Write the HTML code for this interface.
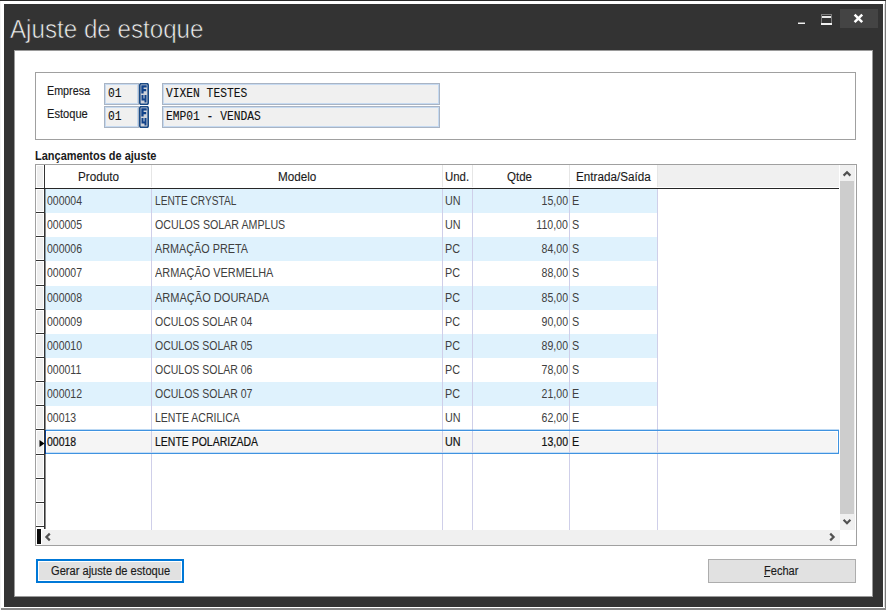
<!DOCTYPE html>
<html><head><meta charset="utf-8"><title>Ajuste de estoque</title>
<style>
html,body{margin:0;padding:0;width:886px;height:610px;overflow:hidden;background:#fff}
.r{position:absolute;display:block}
.t{position:absolute;white-space:pre;display:block;font-family:"Liberation Sans",sans-serif}
</style></head><body>
<div class="r" style="left:0px;top:0px;width:886px;height:610px;background:#f4f4f4;"></div>
<div class="r" style="left:0px;top:0px;width:886px;height:1px;background:#2b2b2b;"></div>
<div class="r" style="left:1px;top:1px;width:884px;height:607px;background:#ffffff;"></div>
<div class="r" style="left:885px;top:1px;width:1px;height:609px;background:#7a7a7a;"></div>
<div class="r" style="left:884px;top:4px;width:1px;height:603px;background:#d8d8d8;"></div>
<div class="r" style="left:1px;top:608px;width:885px;height:2px;background:#8a8a8a;"></div>
<div class="r" style="left:4px;top:4px;width:879px;height:603px;background:#333333;"></div>
<span class="t" style="left:9.5px;top:15.6px;font-size:26.5px;line-height:26.5px;color:#f0f0f0;font-weight:400;font-family:'Liberation Sans',sans-serif;transform:scaleX(0.912);transform-origin:0 0;-webkit-text-stroke:0.65px #333333">Ajuste de estoque</span>
<div class="r" style="left:798px;top:22px;width:7px;height:1px;background:#8c8c8c;"></div>
<div class="r" style="left:798px;top:23px;width:7px;height:1px;background:#f0f0f0;"></div>
<div class="r" style="left:821px;top:14px;width:11px;height:11px;background:#333;box-sizing:border-box;border:1px solid #7c7c7c"></div>
<div class="r" style="left:822px;top:16px;width:9px;height:2px;background:#e8e8e8;"></div>
<div class="r" style="left:821px;top:23px;width:11px;height:2px;background:#f0f0f0;"></div>
<div class="r" style="left:840px;top:9px;width:38px;height:19px;background:#444444;"></div>
<svg class="r" style="left:853px;top:13px" width="11" height="11" viewBox="0 0 11 11"><path d="M1.6 1.6 L9.2 9.2 M9.2 1.6 L1.6 9.2" stroke="#ffffff" stroke-width="2.5" stroke-linecap="butt"/></svg>
<div class="r" style="left:14px;top:50px;width:859px;height:547px;background:#ffffff;"></div>
<div class="r" style="left:14px;top:50px;width:859px;height:1px;background:#9a9a9a;"></div>
<div class="r" style="left:14px;top:596px;width:859px;height:1px;background:#9a9a9a;"></div>
<div class="r" style="left:14px;top:50px;width:1px;height:547px;background:#9a9a9a;"></div>
<div class="r" style="left:872px;top:50px;width:1px;height:547px;background:#9a9a9a;"></div>
<div class="r" style="left:35px;top:72px;width:821px;height:68px;background:transparent;box-sizing:border-box;border:1px solid #a0a0a0"></div>
<span class="t" style="left:46.5px;top:84.5px;font-size:12px;line-height:12px;color:#1a1a1a;font-weight:400;font-family:'Liberation Sans',sans-serif;transform:scaleX(0.895);transform-origin:0 0;-webkit-text-stroke:0.15px #1a1a1a">Empresa</span>
<span class="t" style="left:46.5px;top:107.5px;font-size:12px;line-height:12px;color:#1a1a1a;font-weight:400;font-family:'Liberation Sans',sans-serif;transform:scaleX(0.925);transform-origin:0 0;-webkit-text-stroke:0.15px #1a1a1a">Estoque</span>
<div class="r" style="left:104px;top:83px;width:35px;height:22px;background:#f0f0f0;box-sizing:border-box;border:1px solid #a9b4c4;box-shadow:inset 0 0 0 1px #c6daf1"></div>
<div class="r" style="left:162px;top:83px;width:278px;height:22px;background:#f0f0f0;box-sizing:border-box;border:1px solid #a9b4c4;box-shadow:inset 0 0 0 1px #c6daf1"></div>
<svg class="r" style="left:139px;top:83px" width="10" height="22" viewBox="0 0 10 22"><rect x="0.8" y="0.7" width="8.4" height="20.6" rx="1.2" fill="#cfd3da" stroke="#1a4a85" stroke-width="1.6"/><path d="M2.3 2.3 H7.7 V4.6 H4.6 V6 H7.2 V8.2 H4.6 V10.6 H2.3 Z" fill="#10428a"/><path d="M2.5 12 H4.5 V15.5 H5.5 V12 H7.5 V19.5 H5.5 V17.5 H2.5 Z" fill="#10428a"/></svg>
<div class="r" style="left:104px;top:106px;width:35px;height:22px;background:#f0f0f0;box-sizing:border-box;border:1px solid #a9b4c4;box-shadow:inset 0 0 0 1px #c6daf1"></div>
<div class="r" style="left:162px;top:106px;width:278px;height:22px;background:#f0f0f0;box-sizing:border-box;border:1px solid #a9b4c4;box-shadow:inset 0 0 0 1px #c6daf1"></div>
<svg class="r" style="left:139px;top:106px" width="10" height="22" viewBox="0 0 10 22"><rect x="0.8" y="0.7" width="8.4" height="20.6" rx="1.2" fill="#cfd3da" stroke="#1a4a85" stroke-width="1.6"/><path d="M2.3 2.3 H7.7 V4.6 H4.6 V6 H7.2 V8.2 H4.6 V10.6 H2.3 Z" fill="#10428a"/><path d="M2.5 12 H4.5 V15.5 H5.5 V12 H7.5 V19.5 H5.5 V17.5 H2.5 Z" fill="#10428a"/></svg>
<span class="t" style="left:108px;top:87.5px;font-size:12px;line-height:12px;color:#111111;font-weight:400;font-family:'Liberation Mono',sans-serif;transform:scaleX(0.94);transform-origin:0 0;-webkit-text-stroke:0.1px #111">01</span>
<span class="t" style="left:108px;top:110.5px;font-size:12px;line-height:12px;color:#111111;font-weight:400;font-family:'Liberation Mono',sans-serif;transform:scaleX(0.94);transform-origin:0 0;-webkit-text-stroke:0.1px #111">01</span>
<span class="t" style="left:166px;top:87.5px;font-size:12px;line-height:12px;color:#111111;font-weight:400;font-family:'Liberation Mono',sans-serif;transform:scaleX(0.94);transform-origin:0 0;-webkit-text-stroke:0.1px #111">VIXEN TESTES</span>
<span class="t" style="left:166px;top:110.5px;font-size:12px;line-height:12px;color:#111111;font-weight:400;font-family:'Liberation Mono',sans-serif;transform:scaleX(0.94);transform-origin:0 0;-webkit-text-stroke:0.1px #111">EMP01 - VENDAS</span>
<span class="t" style="left:35px;top:150px;font-size:12px;line-height:12px;color:#1a1a1a;font-weight:700;font-family:'Liberation Sans',sans-serif;transform:scaleX(0.915);transform-origin:0 0;">Lançamentos de ajuste</span>
<div class="r" style="left:35px;top:164px;width:822px;height:382px;background:#ffffff;box-sizing:border-box;border:1px solid #a0a0a0"></div>
<div class="r" style="left:657px;top:165px;width:182px;height:22px;background:#f0f0f0;"></div>
<div class="r" style="left:151px;top:165px;width:1px;height:22px;background:#e6e6e6;"></div>
<div class="r" style="left:442px;top:165px;width:1px;height:22px;background:#e6e6e6;"></div>
<div class="r" style="left:472px;top:165px;width:1px;height:22px;background:#e6e6e6;"></div>
<div class="r" style="left:569px;top:165px;width:1px;height:22px;background:#e6e6e6;"></div>
<div class="r" style="left:657px;top:165px;width:1px;height:22px;background:#e6e6e6;"></div>
<span class="t" style="left:78px;top:170.5px;font-size:12px;line-height:12px;color:#1a1a1a;font-weight:400;font-family:'Liberation Sans',sans-serif;transform:scaleX(0.975);transform-origin:0 0;-webkit-text-stroke:0.12px #1a1a1a">Produto</span>
<span class="t" style="left:278px;top:170.5px;font-size:12px;line-height:12px;color:#1a1a1a;font-weight:400;font-family:'Liberation Sans',sans-serif;transform:scaleX(0.975);transform-origin:0 0;-webkit-text-stroke:0.12px #1a1a1a">Modelo</span>
<span class="t" style="left:445px;top:170.5px;font-size:12px;line-height:12px;color:#1a1a1a;font-weight:400;font-family:'Liberation Sans',sans-serif;transform:scaleX(0.95);transform-origin:0 0;-webkit-text-stroke:0.12px #1a1a1a">Und.</span>
<span class="t" style="left:507.2px;top:170.5px;font-size:12px;line-height:12px;color:#1a1a1a;font-weight:400;font-family:'Liberation Sans',sans-serif;transform:scaleX(0.96);transform-origin:0 0;-webkit-text-stroke:0.12px #1a1a1a">Qtde</span>
<span class="t" style="left:575.8px;top:170.5px;font-size:12px;line-height:12px;color:#1a1a1a;font-weight:400;font-family:'Liberation Sans',sans-serif;transform:scaleX(0.974);transform-origin:0 0;-webkit-text-stroke:0.12px #1a1a1a">Entrada/Saída</span>
<div class="r" style="left:36px;top:165px;width:8px;height:364px;background:#ffffff;"></div>
<div class="r" style="left:37px;top:166px;width:6px;height:21px;background:#efefef;"></div>
<div class="r" style="left:37px;top:190px;width:6px;height:21px;background:#efefef;"></div>
<div class="r" style="left:37px;top:214px;width:6px;height:21px;background:#efefef;"></div>
<div class="r" style="left:36px;top:212px;width:8px;height:1px;background:#333333;"></div>
<div class="r" style="left:37px;top:238px;width:6px;height:21px;background:#efefef;"></div>
<div class="r" style="left:36px;top:236px;width:8px;height:1px;background:#333333;"></div>
<div class="r" style="left:37px;top:262px;width:6px;height:22px;background:#efefef;"></div>
<div class="r" style="left:36px;top:260px;width:8px;height:1px;background:#333333;"></div>
<div class="r" style="left:37px;top:287px;width:6px;height:21px;background:#efefef;"></div>
<div class="r" style="left:36px;top:285px;width:8px;height:1px;background:#333333;"></div>
<div class="r" style="left:37px;top:311px;width:6px;height:21px;background:#efefef;"></div>
<div class="r" style="left:36px;top:309px;width:8px;height:1px;background:#333333;"></div>
<div class="r" style="left:37px;top:335px;width:6px;height:21px;background:#efefef;"></div>
<div class="r" style="left:36px;top:333px;width:8px;height:1px;background:#333333;"></div>
<div class="r" style="left:37px;top:359px;width:6px;height:21px;background:#efefef;"></div>
<div class="r" style="left:36px;top:357px;width:8px;height:1px;background:#333333;"></div>
<div class="r" style="left:37px;top:383px;width:6px;height:21px;background:#efefef;"></div>
<div class="r" style="left:36px;top:381px;width:8px;height:1px;background:#333333;"></div>
<div class="r" style="left:37px;top:407px;width:6px;height:21px;background:#efefef;"></div>
<div class="r" style="left:36px;top:405px;width:8px;height:1px;background:#333333;"></div>
<div class="r" style="left:37px;top:431px;width:6px;height:22px;background:#efefef;"></div>
<div class="r" style="left:36px;top:429px;width:8px;height:1px;background:#333333;"></div>
<div class="r" style="left:37px;top:456px;width:6px;height:21px;background:#efefef;"></div>
<div class="r" style="left:36px;top:454px;width:8px;height:1px;background:#333333;"></div>
<div class="r" style="left:37px;top:480px;width:6px;height:21px;background:#efefef;"></div>
<div class="r" style="left:36px;top:478px;width:8px;height:1px;background:#333333;"></div>
<div class="r" style="left:37px;top:504px;width:6px;height:21px;background:#efefef;"></div>
<div class="r" style="left:36px;top:502px;width:8px;height:1px;background:#333333;"></div>
<div class="r" style="left:37px;top:528px;width:6px;height:0px;background:#efefef;"></div>
<div class="r" style="left:36px;top:526px;width:8px;height:1px;background:#333333;"></div>
<div class="r" style="left:44px;top:165px;width:1px;height:364px;background:#333333;"></div>
<div class="r" style="left:35px;top:188px;width:804px;height:1px;background:#262626;"></div>
<div class="r" style="left:45px;top:189px;width:612px;height:24px;background:#dff2fd;"></div>
<div class="r" style="left:45px;top:189px;width:1px;height:24px;background:#8da2ae;"></div>
<div class="r" style="left:151px;top:189px;width:1px;height:24px;background:#cfcfe9;"></div>
<div class="r" style="left:442px;top:189px;width:1px;height:24px;background:#cfcfe9;"></div>
<div class="r" style="left:472px;top:189px;width:1px;height:24px;background:#cfcfe9;"></div>
<div class="r" style="left:569px;top:189px;width:1px;height:24px;background:#cfcfe9;"></div>
<div class="r" style="left:657px;top:189px;width:1px;height:24px;background:#cfcfe9;"></div>
<span class="t" style="left:47px;top:194.5px;font-size:12px;line-height:12px;color:#404040;font-weight:400;font-family:'Liberation Sans',sans-serif;transform:scaleX(0.875);transform-origin:0 0;">000004</span>
<span class="t" style="left:155px;top:194.5px;font-size:12px;line-height:12px;color:#404040;font-weight:400;font-family:'Liberation Sans',sans-serif;transform:scaleX(0.8444998441882208);transform-origin:0 0;">LENTE CRYSTAL</span>
<span class="t" style="left:444.5px;top:194.5px;font-size:12px;line-height:12px;color:#404040;font-weight:400;font-family:'Liberation Sans',sans-serif;transform:scaleX(0.9);transform-origin:0 0;">UN</span>
<span class="t" style="right:318px;top:194.5px;font-size:12px;line-height:12px;color:#404040;font-family:'Liberation Sans',sans-serif;transform:scaleX(0.88);transform-origin:100% 0;">15,00</span>
<span class="t" style="left:572px;top:194.5px;font-size:12px;line-height:12px;color:#404040;font-weight:400;font-family:'Liberation Sans',sans-serif;transform:scaleX(0.9);transform-origin:0 0;">E</span>
<div class="r" style="left:45px;top:213px;width:612px;height:24px;background:#ffffff;"></div>
<div class="r" style="left:45px;top:213px;width:1px;height:24px;background:#8a8a8a;"></div>
<div class="r" style="left:151px;top:213px;width:1px;height:24px;background:#cfcfe9;"></div>
<div class="r" style="left:442px;top:213px;width:1px;height:24px;background:#cfcfe9;"></div>
<div class="r" style="left:472px;top:213px;width:1px;height:24px;background:#cfcfe9;"></div>
<div class="r" style="left:569px;top:213px;width:1px;height:24px;background:#cfcfe9;"></div>
<div class="r" style="left:657px;top:213px;width:1px;height:24px;background:#cfcfe9;"></div>
<span class="t" style="left:47px;top:218.5px;font-size:12px;line-height:12px;color:#404040;font-weight:400;font-family:'Liberation Sans',sans-serif;transform:scaleX(0.875);transform-origin:0 0;">000005</span>
<span class="t" style="left:155px;top:218.5px;font-size:12px;line-height:12px;color:#404040;font-weight:400;font-family:'Liberation Sans',sans-serif;transform:scaleX(0.8874045801526717);transform-origin:0 0;">OCULOS SOLAR AMPLUS</span>
<span class="t" style="left:444.5px;top:218.5px;font-size:12px;line-height:12px;color:#404040;font-weight:400;font-family:'Liberation Sans',sans-serif;transform:scaleX(0.9);transform-origin:0 0;">UN</span>
<span class="t" style="right:318px;top:218.5px;font-size:12px;line-height:12px;color:#404040;font-family:'Liberation Sans',sans-serif;transform:scaleX(0.88);transform-origin:100% 0;">110,00</span>
<span class="t" style="left:572px;top:218.5px;font-size:12px;line-height:12px;color:#404040;font-weight:400;font-family:'Liberation Sans',sans-serif;transform:scaleX(0.9);transform-origin:0 0;">S</span>
<div class="r" style="left:45px;top:237px;width:612px;height:24px;background:#dff2fd;"></div>
<div class="r" style="left:45px;top:237px;width:1px;height:24px;background:#8da2ae;"></div>
<div class="r" style="left:151px;top:237px;width:1px;height:24px;background:#cfcfe9;"></div>
<div class="r" style="left:442px;top:237px;width:1px;height:24px;background:#cfcfe9;"></div>
<div class="r" style="left:472px;top:237px;width:1px;height:24px;background:#cfcfe9;"></div>
<div class="r" style="left:569px;top:237px;width:1px;height:24px;background:#cfcfe9;"></div>
<div class="r" style="left:657px;top:237px;width:1px;height:24px;background:#cfcfe9;"></div>
<span class="t" style="left:47px;top:242.5px;font-size:12px;line-height:12px;color:#404040;font-weight:400;font-family:'Liberation Sans',sans-serif;transform:scaleX(0.875);transform-origin:0 0;">000006</span>
<span class="t" style="left:155px;top:242.5px;font-size:12px;line-height:12px;color:#404040;font-weight:400;font-family:'Liberation Sans',sans-serif;transform:scaleX(0.9017744594201493);transform-origin:0 0;">ARMAÇÃO PRETA</span>
<span class="t" style="left:444.5px;top:242.5px;font-size:12px;line-height:12px;color:#404040;font-weight:400;font-family:'Liberation Sans',sans-serif;transform:scaleX(0.9);transform-origin:0 0;">PC</span>
<span class="t" style="right:318px;top:242.5px;font-size:12px;line-height:12px;color:#404040;font-family:'Liberation Sans',sans-serif;transform:scaleX(0.88);transform-origin:100% 0;">84,00</span>
<span class="t" style="left:572px;top:242.5px;font-size:12px;line-height:12px;color:#404040;font-weight:400;font-family:'Liberation Sans',sans-serif;transform:scaleX(0.9);transform-origin:0 0;">S</span>
<div class="r" style="left:45px;top:261px;width:612px;height:25px;background:#ffffff;"></div>
<div class="r" style="left:45px;top:261px;width:1px;height:25px;background:#8a8a8a;"></div>
<div class="r" style="left:151px;top:261px;width:1px;height:25px;background:#cfcfe9;"></div>
<div class="r" style="left:442px;top:261px;width:1px;height:25px;background:#cfcfe9;"></div>
<div class="r" style="left:472px;top:261px;width:1px;height:25px;background:#cfcfe9;"></div>
<div class="r" style="left:569px;top:261px;width:1px;height:25px;background:#cfcfe9;"></div>
<div class="r" style="left:657px;top:261px;width:1px;height:25px;background:#cfcfe9;"></div>
<span class="t" style="left:47px;top:266.5px;font-size:12px;line-height:12px;color:#404040;font-weight:400;font-family:'Liberation Sans',sans-serif;transform:scaleX(0.875);transform-origin:0 0;">000007</span>
<span class="t" style="left:155px;top:266.5px;font-size:12px;line-height:12px;color:#404040;font-weight:400;font-family:'Liberation Sans',sans-serif;transform:scaleX(0.9105591017457508);transform-origin:0 0;">ARMAÇÃO VERMELHA</span>
<span class="t" style="left:444.5px;top:266.5px;font-size:12px;line-height:12px;color:#404040;font-weight:400;font-family:'Liberation Sans',sans-serif;transform:scaleX(0.9);transform-origin:0 0;">PC</span>
<span class="t" style="right:318px;top:266.5px;font-size:12px;line-height:12px;color:#404040;font-family:'Liberation Sans',sans-serif;transform:scaleX(0.88);transform-origin:100% 0;">88,00</span>
<span class="t" style="left:572px;top:266.5px;font-size:12px;line-height:12px;color:#404040;font-weight:400;font-family:'Liberation Sans',sans-serif;transform:scaleX(0.9);transform-origin:0 0;">S</span>
<div class="r" style="left:45px;top:286px;width:612px;height:24px;background:#dff2fd;"></div>
<div class="r" style="left:45px;top:286px;width:1px;height:24px;background:#8da2ae;"></div>
<div class="r" style="left:151px;top:286px;width:1px;height:24px;background:#cfcfe9;"></div>
<div class="r" style="left:442px;top:286px;width:1px;height:24px;background:#cfcfe9;"></div>
<div class="r" style="left:472px;top:286px;width:1px;height:24px;background:#cfcfe9;"></div>
<div class="r" style="left:569px;top:286px;width:1px;height:24px;background:#cfcfe9;"></div>
<div class="r" style="left:657px;top:286px;width:1px;height:24px;background:#cfcfe9;"></div>
<span class="t" style="left:47px;top:291.5px;font-size:12px;line-height:12px;color:#404040;font-weight:400;font-family:'Liberation Sans',sans-serif;transform:scaleX(0.875);transform-origin:0 0;">000008</span>
<span class="t" style="left:155px;top:291.5px;font-size:12px;line-height:12px;color:#404040;font-weight:400;font-family:'Liberation Sans',sans-serif;transform:scaleX(0.9192065795839381);transform-origin:0 0;">ARMAÇÃO DOURADA</span>
<span class="t" style="left:444.5px;top:291.5px;font-size:12px;line-height:12px;color:#404040;font-weight:400;font-family:'Liberation Sans',sans-serif;transform:scaleX(0.9);transform-origin:0 0;">PC</span>
<span class="t" style="right:318px;top:291.5px;font-size:12px;line-height:12px;color:#404040;font-family:'Liberation Sans',sans-serif;transform:scaleX(0.88);transform-origin:100% 0;">85,00</span>
<span class="t" style="left:572px;top:291.5px;font-size:12px;line-height:12px;color:#404040;font-weight:400;font-family:'Liberation Sans',sans-serif;transform:scaleX(0.9);transform-origin:0 0;">S</span>
<div class="r" style="left:45px;top:310px;width:612px;height:24px;background:#ffffff;"></div>
<div class="r" style="left:45px;top:310px;width:1px;height:24px;background:#8a8a8a;"></div>
<div class="r" style="left:151px;top:310px;width:1px;height:24px;background:#cfcfe9;"></div>
<div class="r" style="left:442px;top:310px;width:1px;height:24px;background:#cfcfe9;"></div>
<div class="r" style="left:472px;top:310px;width:1px;height:24px;background:#cfcfe9;"></div>
<div class="r" style="left:569px;top:310px;width:1px;height:24px;background:#cfcfe9;"></div>
<div class="r" style="left:657px;top:310px;width:1px;height:24px;background:#cfcfe9;"></div>
<span class="t" style="left:47px;top:315.5px;font-size:12px;line-height:12px;color:#404040;font-weight:400;font-family:'Liberation Sans',sans-serif;transform:scaleX(0.875);transform-origin:0 0;">000009</span>
<span class="t" style="left:155px;top:315.5px;font-size:12px;line-height:12px;color:#404040;font-weight:400;font-family:'Liberation Sans',sans-serif;transform:scaleX(0.8744837493266296);transform-origin:0 0;">OCULOS SOLAR 04</span>
<span class="t" style="left:444.5px;top:315.5px;font-size:12px;line-height:12px;color:#404040;font-weight:400;font-family:'Liberation Sans',sans-serif;transform:scaleX(0.9);transform-origin:0 0;">PC</span>
<span class="t" style="right:318px;top:315.5px;font-size:12px;line-height:12px;color:#404040;font-family:'Liberation Sans',sans-serif;transform:scaleX(0.88);transform-origin:100% 0;">90,00</span>
<span class="t" style="left:572px;top:315.5px;font-size:12px;line-height:12px;color:#404040;font-weight:400;font-family:'Liberation Sans',sans-serif;transform:scaleX(0.9);transform-origin:0 0;">S</span>
<div class="r" style="left:45px;top:334px;width:612px;height:24px;background:#dff2fd;"></div>
<div class="r" style="left:45px;top:334px;width:1px;height:24px;background:#8da2ae;"></div>
<div class="r" style="left:151px;top:334px;width:1px;height:24px;background:#cfcfe9;"></div>
<div class="r" style="left:442px;top:334px;width:1px;height:24px;background:#cfcfe9;"></div>
<div class="r" style="left:472px;top:334px;width:1px;height:24px;background:#cfcfe9;"></div>
<div class="r" style="left:569px;top:334px;width:1px;height:24px;background:#cfcfe9;"></div>
<div class="r" style="left:657px;top:334px;width:1px;height:24px;background:#cfcfe9;"></div>
<span class="t" style="left:47px;top:339.5px;font-size:12px;line-height:12px;color:#404040;font-weight:400;font-family:'Liberation Sans',sans-serif;transform:scaleX(0.875);transform-origin:0 0;">000010</span>
<span class="t" style="left:155px;top:339.5px;font-size:12px;line-height:12px;color:#404040;font-weight:400;font-family:'Liberation Sans',sans-serif;transform:scaleX(0.8744837493266296);transform-origin:0 0;">OCULOS SOLAR 05</span>
<span class="t" style="left:444.5px;top:339.5px;font-size:12px;line-height:12px;color:#404040;font-weight:400;font-family:'Liberation Sans',sans-serif;transform:scaleX(0.9);transform-origin:0 0;">PC</span>
<span class="t" style="right:318px;top:339.5px;font-size:12px;line-height:12px;color:#404040;font-family:'Liberation Sans',sans-serif;transform:scaleX(0.88);transform-origin:100% 0;">89,00</span>
<span class="t" style="left:572px;top:339.5px;font-size:12px;line-height:12px;color:#404040;font-weight:400;font-family:'Liberation Sans',sans-serif;transform:scaleX(0.9);transform-origin:0 0;">S</span>
<div class="r" style="left:45px;top:358px;width:612px;height:24px;background:#ffffff;"></div>
<div class="r" style="left:45px;top:358px;width:1px;height:24px;background:#8a8a8a;"></div>
<div class="r" style="left:151px;top:358px;width:1px;height:24px;background:#cfcfe9;"></div>
<div class="r" style="left:442px;top:358px;width:1px;height:24px;background:#cfcfe9;"></div>
<div class="r" style="left:472px;top:358px;width:1px;height:24px;background:#cfcfe9;"></div>
<div class="r" style="left:569px;top:358px;width:1px;height:24px;background:#cfcfe9;"></div>
<div class="r" style="left:657px;top:358px;width:1px;height:24px;background:#cfcfe9;"></div>
<span class="t" style="left:47px;top:363.5px;font-size:12px;line-height:12px;color:#404040;font-weight:400;font-family:'Liberation Sans',sans-serif;transform:scaleX(0.875);transform-origin:0 0;">000011</span>
<span class="t" style="left:155px;top:363.5px;font-size:12px;line-height:12px;color:#404040;font-weight:400;font-family:'Liberation Sans',sans-serif;transform:scaleX(0.8744837493266296);transform-origin:0 0;">OCULOS SOLAR 06</span>
<span class="t" style="left:444.5px;top:363.5px;font-size:12px;line-height:12px;color:#404040;font-weight:400;font-family:'Liberation Sans',sans-serif;transform:scaleX(0.9);transform-origin:0 0;">PC</span>
<span class="t" style="right:318px;top:363.5px;font-size:12px;line-height:12px;color:#404040;font-family:'Liberation Sans',sans-serif;transform:scaleX(0.88);transform-origin:100% 0;">78,00</span>
<span class="t" style="left:572px;top:363.5px;font-size:12px;line-height:12px;color:#404040;font-weight:400;font-family:'Liberation Sans',sans-serif;transform:scaleX(0.9);transform-origin:0 0;">S</span>
<div class="r" style="left:45px;top:382px;width:612px;height:24px;background:#dff2fd;"></div>
<div class="r" style="left:45px;top:382px;width:1px;height:24px;background:#8da2ae;"></div>
<div class="r" style="left:151px;top:382px;width:1px;height:24px;background:#cfcfe9;"></div>
<div class="r" style="left:442px;top:382px;width:1px;height:24px;background:#cfcfe9;"></div>
<div class="r" style="left:472px;top:382px;width:1px;height:24px;background:#cfcfe9;"></div>
<div class="r" style="left:569px;top:382px;width:1px;height:24px;background:#cfcfe9;"></div>
<div class="r" style="left:657px;top:382px;width:1px;height:24px;background:#cfcfe9;"></div>
<span class="t" style="left:47px;top:387.5px;font-size:12px;line-height:12px;color:#404040;font-weight:400;font-family:'Liberation Sans',sans-serif;transform:scaleX(0.875);transform-origin:0 0;">000012</span>
<span class="t" style="left:155px;top:387.5px;font-size:12px;line-height:12px;color:#404040;font-weight:400;font-family:'Liberation Sans',sans-serif;transform:scaleX(0.8744837493266296);transform-origin:0 0;">OCULOS SOLAR 07</span>
<span class="t" style="left:444.5px;top:387.5px;font-size:12px;line-height:12px;color:#404040;font-weight:400;font-family:'Liberation Sans',sans-serif;transform:scaleX(0.9);transform-origin:0 0;">PC</span>
<span class="t" style="right:318px;top:387.5px;font-size:12px;line-height:12px;color:#404040;font-family:'Liberation Sans',sans-serif;transform:scaleX(0.88);transform-origin:100% 0;">21,00</span>
<span class="t" style="left:572px;top:387.5px;font-size:12px;line-height:12px;color:#404040;font-weight:400;font-family:'Liberation Sans',sans-serif;transform:scaleX(0.9);transform-origin:0 0;">E</span>
<div class="r" style="left:45px;top:406px;width:612px;height:24px;background:#ffffff;"></div>
<div class="r" style="left:45px;top:406px;width:1px;height:24px;background:#8a8a8a;"></div>
<div class="r" style="left:151px;top:406px;width:1px;height:24px;background:#cfcfe9;"></div>
<div class="r" style="left:442px;top:406px;width:1px;height:24px;background:#cfcfe9;"></div>
<div class="r" style="left:472px;top:406px;width:1px;height:24px;background:#cfcfe9;"></div>
<div class="r" style="left:569px;top:406px;width:1px;height:24px;background:#cfcfe9;"></div>
<div class="r" style="left:657px;top:406px;width:1px;height:24px;background:#cfcfe9;"></div>
<span class="t" style="left:47px;top:411.5px;font-size:12px;line-height:12px;color:#404040;font-weight:400;font-family:'Liberation Sans',sans-serif;transform:scaleX(0.875);transform-origin:0 0;">00013</span>
<span class="t" style="left:155px;top:411.5px;font-size:12px;line-height:12px;color:#404040;font-weight:400;font-family:'Liberation Sans',sans-serif;transform:scaleX(0.8769389865563599);transform-origin:0 0;">LENTE ACRILICA</span>
<span class="t" style="left:444.5px;top:411.5px;font-size:12px;line-height:12px;color:#404040;font-weight:400;font-family:'Liberation Sans',sans-serif;transform:scaleX(0.9);transform-origin:0 0;">UN</span>
<span class="t" style="right:318px;top:411.5px;font-size:12px;line-height:12px;color:#404040;font-family:'Liberation Sans',sans-serif;transform:scaleX(0.88);transform-origin:100% 0;">62,00</span>
<span class="t" style="left:572px;top:411.5px;font-size:12px;line-height:12px;color:#404040;font-weight:400;font-family:'Liberation Sans',sans-serif;transform:scaleX(0.9);transform-origin:0 0;">E</span>
<div class="r" style="left:45px;top:430px;width:794px;height:24px;background:#f5f5f5;box-sizing:border-box;border:1px solid #3f93e0;box-shadow:inset 0 0 0 1px #ffffff"></div>
<div class="r" style="left:45px;top:430px;width:1px;height:24px;background:#0a3d8f;"></div>
<div class="r" style="left:46px;top:429px;width:793px;height:1px;background:rgba(63,147,224,0.35);"></div>
<div class="r" style="left:46px;top:452px;width:792px;height:1px;background:rgba(63,147,224,0.30);"></div>
<div class="r" style="left:151px;top:431px;width:1px;height:22px;background:#cfcfe9;"></div>
<div class="r" style="left:442px;top:431px;width:1px;height:22px;background:#cfcfe9;"></div>
<div class="r" style="left:472px;top:431px;width:1px;height:22px;background:#cfcfe9;"></div>
<div class="r" style="left:569px;top:431px;width:1px;height:22px;background:#cfcfe9;"></div>
<div class="r" style="left:657px;top:431px;width:1px;height:22px;background:#cfcfe9;"></div>
<span class="t" style="left:47px;top:435.5px;font-size:12px;line-height:12px;color:#111111;font-weight:400;font-family:'Liberation Sans',sans-serif;transform:scaleX(0.875);transform-origin:0 0;-webkit-text-stroke:0.2px #111111">00018</span>
<span class="t" style="left:155px;top:435.5px;font-size:12px;line-height:12px;color:#111111;font-weight:400;font-family:'Liberation Sans',sans-serif;transform:scaleX(0.8735067355757012);transform-origin:0 0;-webkit-text-stroke:0.2px #111111">LENTE POLARIZADA</span>
<span class="t" style="left:444.5px;top:435.5px;font-size:12px;line-height:12px;color:#111111;font-weight:400;font-family:'Liberation Sans',sans-serif;transform:scaleX(0.9);transform-origin:0 0;-webkit-text-stroke:0.2px #111111">UN</span>
<span class="t" style="right:318px;top:435.5px;font-size:12px;line-height:12px;color:#111111;font-family:'Liberation Sans',sans-serif;transform:scaleX(0.88);transform-origin:100% 0;-webkit-text-stroke:0.2px #111111">13,00</span>
<span class="t" style="left:572px;top:435.5px;font-size:12px;line-height:12px;color:#111111;font-weight:400;font-family:'Liberation Sans',sans-serif;transform:scaleX(0.9);transform-origin:0 0;-webkit-text-stroke:0.2px #111111">E</span>
<div class="r" style="left:45px;top:454px;width:1px;height:75px;background:#8a8a8a;"></div>
<div class="r" style="left:151px;top:454px;width:1px;height:76px;background:#cfcfe9;"></div>
<div class="r" style="left:442px;top:454px;width:1px;height:76px;background:#cfcfe9;"></div>
<div class="r" style="left:472px;top:454px;width:1px;height:76px;background:#cfcfe9;"></div>
<div class="r" style="left:569px;top:454px;width:1px;height:76px;background:#cfcfe9;"></div>
<div class="r" style="left:657px;top:454px;width:1px;height:76px;background:#cfcfe9;"></div>
<svg class="r" style="left:39px;top:439px" width="6" height="9" viewBox="0 0 6 9"><path d="M0.5 1 L5.5 4.5 L0.5 8 Z" fill="#000"/></svg>
<div class="r" style="left:840px;top:165px;width:15px;height:365px;background:#f0f0f0;"></div>
<div class="r" style="left:839px;top:165px;width:1px;height:23px;background:#ffffff;"></div>
<div class="r" style="left:840px;top:181px;width:14px;height:333px;background:#cdcdcd;"></div>
<svg class="r" style="left:842px;top:169px" width="10" height="9" viewBox="0 0 10 9"><path d="M1.6 6.6 L5 3.2 L8.4 6.6" fill="none" stroke="#505050" stroke-width="2.2"/></svg>
<svg class="r" style="left:842px;top:518px" width="10" height="9" viewBox="0 0 10 9"><path d="M1.6 1.8 L5 5.2 L8.4 1.8" fill="none" stroke="#505050" stroke-width="2.2"/></svg>
<div class="r" style="left:36px;top:529px;width:6px;height:16px;background:#ffffff;"></div>
<div class="r" style="left:42px;top:530px;width:798px;height:15px;background:#f0f0f0;"></div>
<div class="r" style="left:37px;top:529px;width:4px;height:15px;background:#0a0a0a;"></div>
<svg class="r" style="left:44px;top:532px" width="8" height="10" viewBox="0 0 8 10"><path d="M5.8 1.6 L2.4 5 L5.8 8.4" fill="none" stroke="#505050" stroke-width="2.2"/></svg>
<svg class="r" style="left:828px;top:532px" width="8" height="10" viewBox="0 0 8 10"><path d="M2.2 1.6 L5.6 5 L2.2 8.4" fill="none" stroke="#505050" stroke-width="2.2"/></svg>
<div class="r" style="left:840px;top:530px;width:15px;height:15px;background:#ffffff;"></div>
<div class="r" style="left:36px;top:559px;width:148px;height:24px;background:#e1e1e1;box-sizing:border-box;border:2px solid #0078d7;box-shadow:inset 0 0 0 1px #fff"></div>
<span class="t" style="left:50.5px;top:565px;font-size:12px;line-height:12px;color:#1a1a1a;font-weight:400;font-family:'Liberation Sans',sans-serif;transform:scaleX(0.925);transform-origin:0 0;-webkit-text-stroke:0.15px #1a1a1a">Gerar ajuste de estoque</span>
<div class="r" style="left:708px;top:559px;width:148px;height:24px;background:#e1e1e1;box-sizing:border-box;border:1px solid #adadad"></div>
<span class="t" style="left:764px;top:565px;font-size:12px;line-height:12px;color:#1a1a1a;font-weight:400;font-family:'Liberation Sans',sans-serif;transform:scaleX(0.92);transform-origin:0 0;-webkit-text-stroke:0.15px #1a1a1a">Fechar</span>
<div class="r" style="left:764px;top:576px;width:6px;height:1px;background:#1a1a1a;"></div>
</body></html>
